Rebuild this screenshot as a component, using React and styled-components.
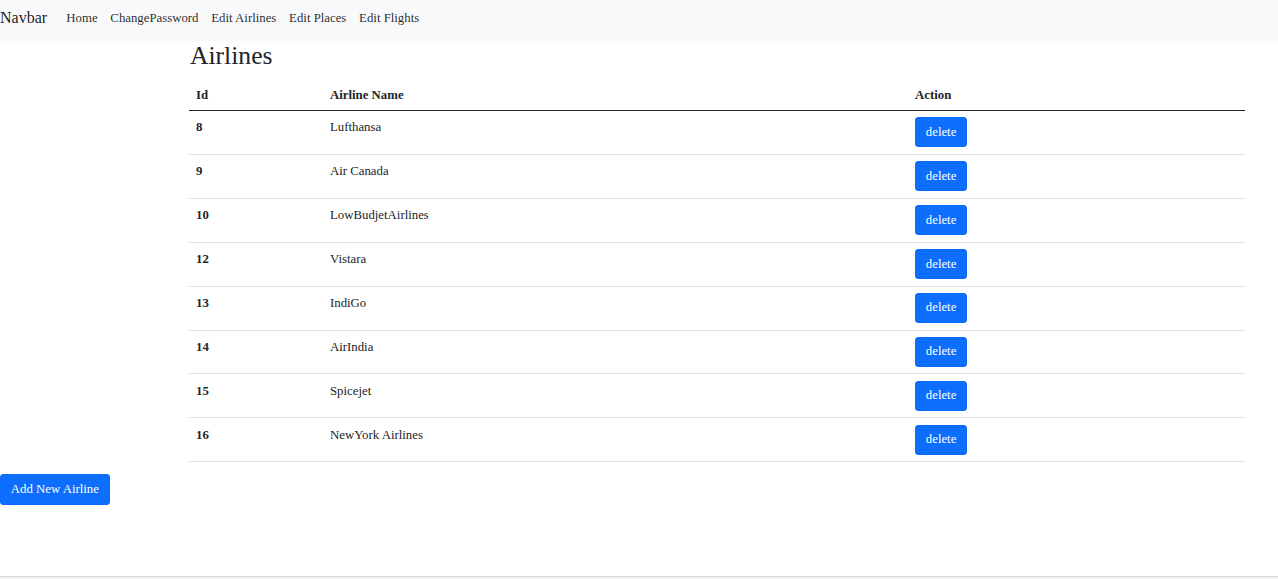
import React from 'react'
import styled, { createGlobalStyle } from 'styled-components'

const airlines = [
  { id: 8, name: 'Lufthansa' },
  { id: 9, name: 'Air Canada' },
  { id: 10, name: 'LowBudjetAirlines' },
  { id: 12, name: 'Vistara' },
  { id: 13, name: 'IndiGo' },
  { id: 14, name: 'AirIndia' },
  { id: 15, name: 'Spicejet' },
  { id: 16, name: 'NewYork Airlines' },
]

const links = ['Home', 'ChangePassword', 'Edit Airlines', 'Edit Places', 'Edit Flights']

export default function App() {
  return (
    <>
      <GlobalStyle />
      <Page>
        <Nav>
          <Brand href="#">Navbar</Brand>
          <NavList>
            {links.map((l) => (
              <NavLink key={l} href="#">{l}</NavLink>
            ))}
          </NavList>
        </Nav>
        <Main>
          <Content>
            <Heading>Airlines</Heading>
            <Table>
              <colgroup>
                <col width="134" />
                <col width="585" />
                <col />
              </colgroup>
              <thead>
                <tr>
                  <Th>Id</Th>
                  <Th>Airline Name</Th>
                  <Th>Action</Th>
                </tr>
              </thead>
              <tbody>
                {airlines.map((a) => (
                  <tr key={a.id}>
                    <IdCell>{a.id}</IdCell>
                    <Td>{a.name}</Td>
                    <Td>
                      <Button>delete</Button>
                    </Td>
                  </tr>
                ))}
              </tbody>
            </Table>
          </Content>
          <AddButton>Add New Airline</AddButton>
        </Main>
        <Footer />
      </Page>
    </>
  )
}

const GlobalStyle = createGlobalStyle`
    * { box-sizing: border-box; }
    body {
        margin: 0;
        font-family: "Liberation Serif", "Times New Roman", serif;
        font-size: 12.8px;
        line-height: 1.5;
        color: #212529;
        background: #fff;
    }
    `;
const Page = styled.div`
    min-height: 100vh;
    display: flex;
    flex-direction: column;
    `;
const Nav = styled.nav`
    height: 41px;
    background-color: #f8f9fa;
    display: flex;
    align-items: center;
    `;
const Brand = styled.a`
    font-size: 16px;
    color: rgba(0, 0, 0, 0.9);
    text-decoration: none;
    margin-right: 12.8px;
    margin-top: -6px;
    `;
const NavList = styled.div`
    display: flex;
    margin-top: -4px;
    `;
const NavLink = styled.a`
    padding: 0 6.4px;
    color: rgba(0, 0, 0, 0.85);
    text-decoration: none;
    `;
const Main = styled.main`
    flex: 1;
    `;
const Content = styled.div`
    margin-left: 189px;
    width: 1056px;
    `;
const Heading = styled.h2`
    margin: 0 0 6.4px 1px;
    font-size: 25.6px;
    font-weight: 400;
    line-height: 1.2;
    `;
const Table = styled.table`
    width: 100%;
    border-collapse: collapse;
    margin-bottom: 12px;
    table-layout: fixed;
    `;
const Th = styled.th`
    text-align: left;
    padding: 7.8px 6.4px 5px 7px;
    border-bottom: 1.6px solid #212529;
    `;
const Td = styled.td`
    padding: 6.4px 6.4px 6.5px 7px;
    vertical-align: top;
    border-bottom: 1px solid #dee2e6;
    line-height: 20px;
    `;
const IdCell = styled(Td)`
    font-weight: 700;
    `;
const Button = styled.button`
    display: block;
    height: 30px;
    font-family: inherit;
    font-size: 12.8px;
    line-height: 1.5;
    color: #fff;
    background-color: #0d6efd;
    border: 1px solid #0d6efd;
    border-radius: 3px;
    padding: 0 9.8px;
    cursor: pointer;
    `;
const AddButton = styled(Button)`
    height: 31px;
    `;
const Footer = styled.div`
    height: 3px;
    border-top: 1px solid #dadada;
    background: #f0f0f0;
    `;
